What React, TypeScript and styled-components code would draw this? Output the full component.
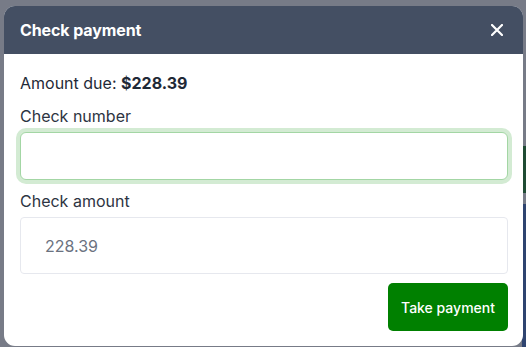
import React from "react";
import styled, { createGlobalStyle } from "styled-components";

const Global = createGlobalStyle`
  html, body { margin: 0; padding: 0; }
  body {
    width: 526px;
    height: 347px;
    overflow: hidden;
    font-family: Inter, "Noto Sans", sans-serif;
  }
  * { box-sizing: border-box; }
`;

const Backdrop = styled.div`
  width: 526px;
  height: 347px;
  background:
    linear-gradient(to bottom,
      transparent 0, transparent 146px,
      #1f4b33 146px, #1f4b33 193px,
      transparent 193px, transparent 204px,
      #2f4470 204px, #2f4470 347px) right / 4px 100% no-repeat,
    #777b87;
  padding: 6px 0 0 4px;
`;

const Modal = styled.div`
  width: 519px;
  height: 340px;
  background: #ffffff;
  border-radius: 11px;
  overflow: hidden;
  display: flex;
  flex-direction: column;
`;

const Header = styled.div`
  height: 48px;
  background: #444f63;
  display: flex;
  align-items: center;
  justify-content: space-between;
  padding: 0 19px 0 16px;
`;

const Title = styled.h2`
  margin: 0;
  font-size: 16px;
  font-weight: 700;
  color: #ffffff;
  letter-spacing: -0.1px;
`;

const Close = styled.button`
  border: 0;
  background: none;
  padding: 0;
  width: 14px;
  height: 14px;
  display: flex;
  align-items: center;
  justify-content: center;
  cursor: pointer;
`;

const Body = styled.div`
  display: flex;
  flex-direction: column;
  padding: 17px 15px 15px 16px;
`;

const Due = styled.div`
  font-size: 16px;
  line-height: 24px;
  color: #1f2937;
  margin-bottom: 9px;
  b { font-weight: 700; }
`;

const Label = styled.label`
  font-size: 16px;
  line-height: 24px;
  color: #2d3442;
  margin-bottom: 4px;
`;

const Input = styled.input<{ $focused?: boolean; $tall?: boolean }>`
  width: 100%;
  height: ${(p) => (p.$tall ? "57px" : "48px")};
  font-family: Inter, "Noto Sans", sans-serif;
  font-size: 16px;
  color: #6b7280;
  padding: 0 24px;
  background: #ffffff;
  outline: none;
  border-radius: ${(p) => (p.$focused ? "6px" : "4px")};
  border: 1px solid ${(p) => (p.$focused ? "#a3d6a4" : "#e6e8ee")};
  box-shadow: ${(p) => (p.$focused ? "0 0 0 4px #d3ebd3" : "none")};
  margin-bottom: 9px;
  &::placeholder { color: #6b7280; }
`;

const Footer = styled.div`
  display: flex;
  justify-content: flex-end;
`;

const Button = styled.button`
  height: 48px;
  padding: 0 13px;
  border: 0;
  border-radius: 5px;
  background: #008000;
  color: #ffffff;
  font-family: Inter, "Noto Sans", sans-serif;
  font-size: 14px;
  font-weight: 500;
  cursor: pointer;
`;

export default function App() {
  return (
    <>
      <Global />
      <Backdrop>
        <Modal>
          <Header>
            <Title>Check payment</Title>
            <Close aria-label="Close">
              <svg width="12" height="12" viewBox="0 0 12 12">
                <path d="M1 1L11 11M11 1L1 11" stroke="#ffffff" strokeWidth="2.2" strokeLinecap="round" />
              </svg>
            </Close>
          </Header>
          <Body>
            <Due>
              Amount due: <b>$228.39</b>
            </Due>
            <Label>Check number</Label>
            <Input $focused />
            <Label>Check amount</Label>
            <Input $tall placeholder="228.39" />
            <Footer>
              <Button>Take payment</Button>
            </Footer>
          </Body>
        </Modal>
      </Backdrop>
    </>
  );
}
